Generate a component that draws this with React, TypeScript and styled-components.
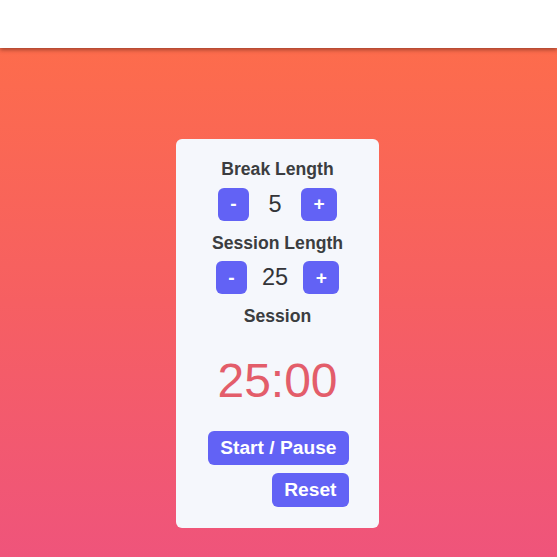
import React, { useState } from "react";
import styled, { createGlobalStyle } from "styled-components";

const GlobalStyle = createGlobalStyle`
  html, body {
    margin: 0;
    padding: 0;
    height: 100%;
    overflow: hidden;
  }
  body {
    font-family: "Liberation Sans", Arial, sans-serif;
  }
  #root {
    min-height: 100%;
  }
`;

const Page = styled.div`
  display: flex;
  flex-direction: column;
  height: 100vh;
`;

const Header = styled.header`
  position: relative;
  z-index: 1;
  flex: 0 0 48px;
  height: 48px;
  background: #ffffff;
  box-shadow: 0 2px 4px rgba(60, 20, 10, 0.45);
`;

const Main = styled.main`
  flex: 1;
  display: flex;
  flex-direction: column;
  align-items: center;
  padding: 91px 2px 0 0;
  background: linear-gradient(180deg, #fd6c4c 0%, #f65f62 50%, #ef547b 100%);
`;

const Card = styled.section`
  box-sizing: border-box;
  width: 203px;
  padding: 21px 30px 21px;
  background: #f5f7fc;
  border-radius: 6px;
  display: flex;
  flex-direction: column;
  align-items: center;
`;

const Label = styled.div`
  font-size: 17.6px;
  font-weight: 700;
  color: #3b3d40;
  line-height: 19.7px;
  margin-bottom: 8px;
`;

const Controls = styled.div`
  display: flex;
  align-items: center;
  justify-content: center;
  gap: 15px;
  margin-bottom: 13px;
`;

const Value = styled.span`
  min-width: 22px;
  text-align: center;
  font-size: 23.5px;
  color: #333438;
  line-height: 27px;
`;

const Button = styled.button<{ $tall?: boolean }>`
  box-sizing: border-box;
  height: ${(p) => (p.$tall ? "34px" : "33px")};
  padding: 0 12.5px;
  border: none;
  border-radius: 6px;
  background: #6262f5;
  color: #ffffff;
  font-family: "Liberation Sans", Arial, sans-serif;
  font-size: 19.2px;
  font-weight: 700;
  line-height: 22px;
  cursor: pointer;
`;

const Timer = styled.div`
  margin: 19px 0 23px;
  font-size: 48px;
  line-height: 53.6px;
  color: #e35d6a;
`;

const Actions = styled.div`
  align-self: stretch;
  display: flex;
  flex-wrap: wrap;
  justify-content: flex-end;
  row-gap: 8px;
  column-gap: 10px;
`;

export default function App() {
  const [breakLen, setBreakLen] = useState(5);
  const [sessionLen, setSessionLen] = useState(25);

  return (
    <>
      <GlobalStyle />
      <Page>
        <Header />
        <Main>
          <Card>
            <Label>Break Length</Label>
            <Controls>
              <Button onClick={() => setBreakLen((v) => Math.max(1, v - 1))}>-</Button>
              <Value>{breakLen}</Value>
              <Button onClick={() => setBreakLen((v) => Math.min(60, v + 1))}>+</Button>
            </Controls>
            <Label>Session Length</Label>
            <Controls>
              <Button onClick={() => setSessionLen((v) => Math.max(1, v - 1))}>-</Button>
              <Value>{sessionLen}</Value>
              <Button onClick={() => setSessionLen((v) => Math.min(60, v + 1))}>+</Button>
            </Controls>
            <Label>Session</Label>
            <Timer>{String(sessionLen).padStart(2, "0")}:00</Timer>
            <Actions>
              <Button $tall>Start / Pause</Button>
              <Button $tall>Reset</Button>
            </Actions>
          </Card>
        </Main>
      </Page>
    </>
  );
}
